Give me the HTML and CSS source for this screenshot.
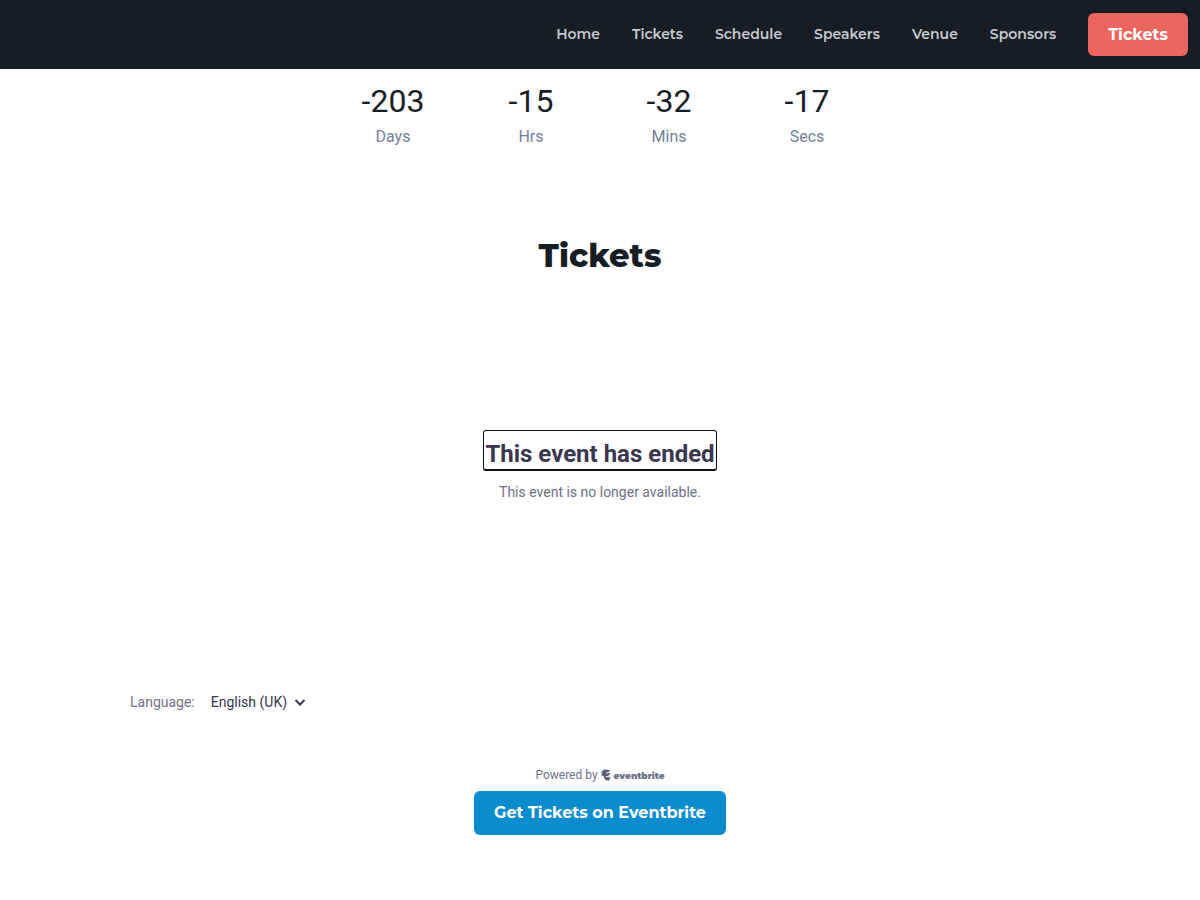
FILE: index.html
```html
<!DOCTYPE html>
<html lang="en">
<head>
  <meta charset="UTF-8">
  <meta name="viewport" content="width=device-width, initial-scale=1">
  <title>Tickets</title>
  <link rel="stylesheet" href="styles.css">
</head>
<body>

  <header class="site-header">
    <nav class="site-nav">
      <a href="#home">Home</a>
      <a href="#tickets">Tickets</a>
      <a href="#schedule">Schedule</a>
      <a href="#speakers">Speakers</a>
      <a href="#venue">Venue</a>
      <a href="#sponsors">Sponsors</a>
    </nav>
    <a class="btn btn-red" href="#tickets">Tickets</a>
  </header>

  <main>
    <section class="countdown" id="home">
      <div class="countdown-item">
        <span class="countdown-value">-203</span>
        <span class="countdown-label">Days</span>
      </div>
      <div class="countdown-item">
        <span class="countdown-value">-15</span>
        <span class="countdown-label">Hrs</span>
      </div>
      <div class="countdown-item">
        <span class="countdown-value">-32</span>
        <span class="countdown-label">Mins</span>
      </div>
      <div class="countdown-item">
        <span class="countdown-value">-17</span>
        <span class="countdown-label">Secs</span>
      </div>
    </section>

    <section class="tickets" id="tickets">
      <h1>Tickets</h1>

      <div class="widget">
        <div class="widget-message">
          <h2>This event has ended</h2>
          <p>This event is no longer available.</p>
        </div>

        <div class="language">
          <label for="language">Language:</label>
          <select id="language">
            <option>English (UK)</option>
          </select>
          <svg class="chevron" viewBox="0 0 12 12" aria-hidden="true">
            <path d="M1.500 4 6 8.500 10.500 4" />
          </svg>
        </div>
      </div>

      <p class="powered">
        <span>Powered by</span>
        <svg class="brand-mark" viewBox="0 0 20 24" aria-hidden="true">
          <path d="M0 7 6 1l12 1-3 5 4 2-5 5 5 3-3 6c-6 1-10-2-10-8l-6-3 3-4z" />
          <path class="brand-cut" d="M10 8l7-1M10 15l7 1" />
        </svg>
        <strong>eventbrite</strong>
      </p>
      <a class="btn btn-blue" href="#eventbrite">Get Tickets on Eventbrite</a>
    </section>
  </main>

</body>
</html>
```

FILE: styles.css
```css
* {
  box-sizing: border-box;
}
body {
  margin: 0;
  font-family: Roboto, sans-serif;
  font-size: 16px;
  line-height: 24px;
  color: #161d25;
  background-color: #fff;
}
h1, h2, p {
  margin: 0;
}
a {
  text-decoration: none;
}
.site-header {
  display: flex;
  justify-content: flex-end;
  align-items: center;
  gap: 32px;
  padding: 13px 12px;
  background-color: #161d25;
}
.site-nav {
  display: flex;
  gap: 32px;
  padding-bottom: 2px;
  font-family: Montserrat, Inter, sans-serif;
  font-size: 14px;
  font-weight: 600;
  line-height: 22px;
}
.site-nav a {
  color: #c5c9d0;
}
.btn {
  display: inline-block;
  padding: 10px 20px;
  border-radius: 6px;
  font-family: Montserrat, Inter, sans-serif;
  font-weight: 700;
  line-height: 23px;
  text-align: center;
  color: #fff;
}
.btn-red {
  background-color: #ec645e;
}
.btn-blue {
  line-height: 24px;
  background-color: #0a8ccf;
}
.countdown {
  display: grid;
  grid-template-columns: repeat(4, 1fr);
  max-width: 552px;
  margin: 0 auto;
  padding: 12px 0 0;
}
.countdown-item {
  display: flex;
  flex-direction: column;
  align-items: center;
}
.countdown-value {
  font-size: 32px;
  line-height: 40px;
}
.countdown-label {
  line-height: 32px;
  color: #718096;
}
.tickets {
  display: flex;
  flex-direction: column;
  align-items: center;
  padding: 79px 16px 64px;
}
.tickets h1 {
  font-family: Montserrat, Inter, sans-serif;
  font-size: 32px;
  font-weight: 800;
  line-height: 48px;
}
.widget {
  width: 100%;
  max-width: 940px;
  padding-top: 150px;
}
.widget-message {
  display: flex;
  flex-direction: column;
  align-items: center;
  min-height: 260px;
  color: #6f7287;
}
.widget-message h2 {
  padding: 8px 1px 0;
  border: 1px solid #0e1116;
  border-bottom-width: 2px;
  border-radius: 3px;
  font-size: 24px;
  line-height: 30px;
  color: #39364f;
}
.widget-message p {
  padding-top: 9px;
  font-size: 14px;
}
.language {
  display: flex;
  align-items: center;
  font-size: 14px;
  color: #6f7287;
}
.language select {
  appearance: none;
  margin: 0 6px 0 16px;
  padding: 0;
  border: none;
  background: none;
  font: inherit;
  color: #39364f;
}
.chevron {
  width: 12px;
  height: 12px;
  fill: none;
  stroke: #39364f;
  stroke-width: 2;
}
.powered {
  display: flex;
  align-items: center;
  gap: 3px;
  padding: 49px 0 4px;
  font-size: 12px;
  color: #6f7287;
}
.powered strong {
  padding-top: 2px;
  font-family: Montserrat, Inter, sans-serif;
  font-size: 9px;
  font-weight: 900;
  line-height: 22px;
}
.brand-mark {
  width: 10px;
  height: 12px;
  fill: #5b5e78;
}
.brand-cut {
  stroke: #fff;
  stroke-width: 2;
}
```
